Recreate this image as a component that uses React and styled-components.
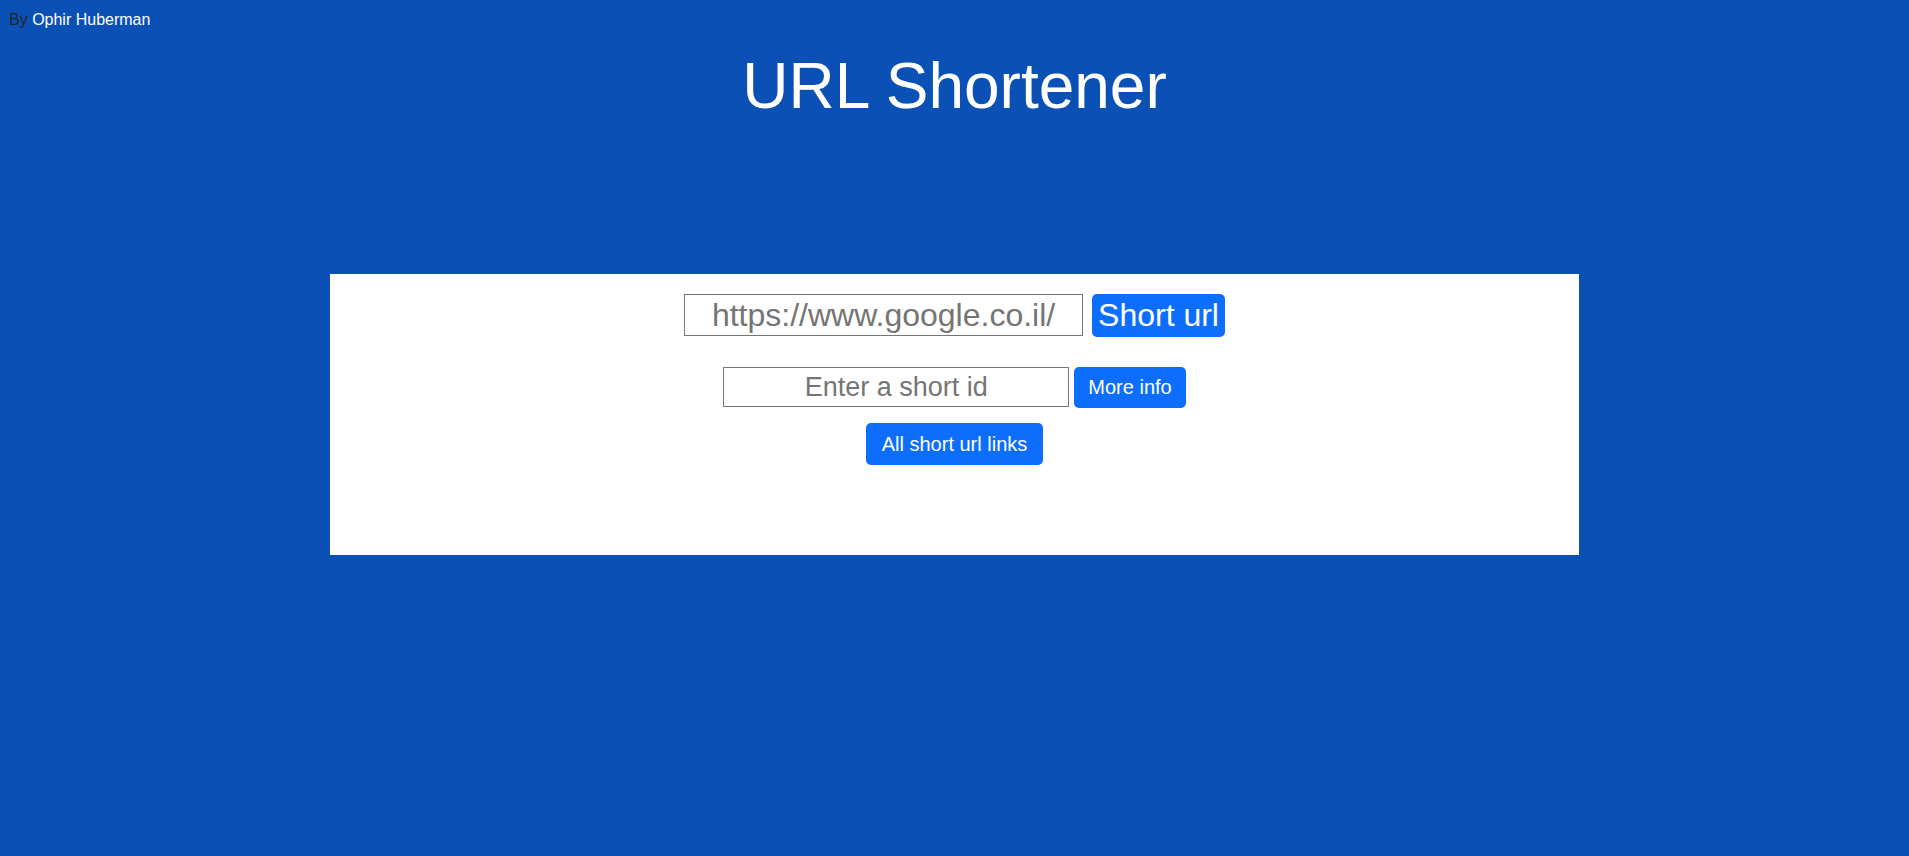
import React, { useState } from "react";
import styled, { createGlobalStyle } from "styled-components";

const GlobalStyle = createGlobalStyle`
  html {
    background-color: #0b50b5;
  }
  body {
    margin: 8px;
    font-family: "Liberation Sans", Arial, sans-serif;
    font-size: 16px;
    line-height: 1.5;
    color: #212529;
    background-color: #0b50b5;
  }
`;

const Credit = styled.div`
  height: 24px;
  padding-left: 1px;
  font-size: 16px;
  line-height: 24px;
  color: #212529;

  span {
    color: #ffffff;
  }
`;

const Title = styled.h1`
  margin: 16px 0 0;
  font-size: 64px;
  font-weight: 400;
  line-height: 1.2;
  color: #ffffff;
  text-align: center;
`;

const Panel = styled.main`
  width: 1249px;
  height: 281px;
  margin: 149px auto 0;
  padding-top: 20px;
  box-sizing: border-box;
  background-color: #ffffff;
  display: flex;
  flex-direction: column;
  align-items: center;
`;

const Row = styled.div`
  display: flex;
  align-items: center;
  gap: ${(p) => p.$gap}px;
  margin-top: ${(p) => p.$top}px;
`;

const Field = styled.input`
  width: ${(p) => p.$width}px;
  height: ${(p) => p.$height}px;
  box-sizing: border-box;
  padding: 0 2px;
  border: 1px solid #767676;
  border-radius: 0;
  font-family: "Liberation Sans", Arial, sans-serif;
  font-size: ${(p) => p.$size}px;
  color: #212529;
  text-align: center;
  outline: none;

  &::placeholder {
    color: #757575;
  }
`;

const Button = styled.button`
  height: ${(p) => p.$height}px;
  padding: 0 ${(p) => p.$pad}px;
  border: none;
  border-radius: 5px;
  background-color: #0d6efd;
  color: #ffffff;
  font-family: "Liberation Sans", Arial, sans-serif;
  font-size: ${(p) => p.$size}px;
  line-height: ${(p) => p.$height}px;
  cursor: pointer;
`;

const App = () => {
  const [url, setUrl] = useState("");
  const [shortId, setShortId] = useState("");

  return (
    <>
      <GlobalStyle />
      <Credit>
        By <span>Ophir Huberman</span>
      </Credit>
      <Title>URL Shortener</Title>
      <Panel>
        <Row $gap={9} $top={0}>
          <Field
            $width={399}
            $height={42}
            $size={32}
            placeholder="https://www.google.co.il/"
            value={url}
            onChange={(e) => setUrl(e.target.value)}
          />
          <Button $height={43} $pad={6} $size={32}>
            Short url
          </Button>
        </Row>
        <Row $gap={5} $top={30}>
          <Field
            $width={346}
            $height={40}
            $size={27}
            placeholder="Enter a short id"
            value={shortId}
            onChange={(e) => setShortId(e.target.value)}
          />
          <Button $height={41} $pad={14} $size={20}>
            More info
          </Button>
        </Row>
        <Row $gap={0} $top={15}>
          <Button $height={42} $pad={16} $size={20}>
            All short url links
          </Button>
        </Row>
      </Panel>
    </>
  );
};

export default App;
